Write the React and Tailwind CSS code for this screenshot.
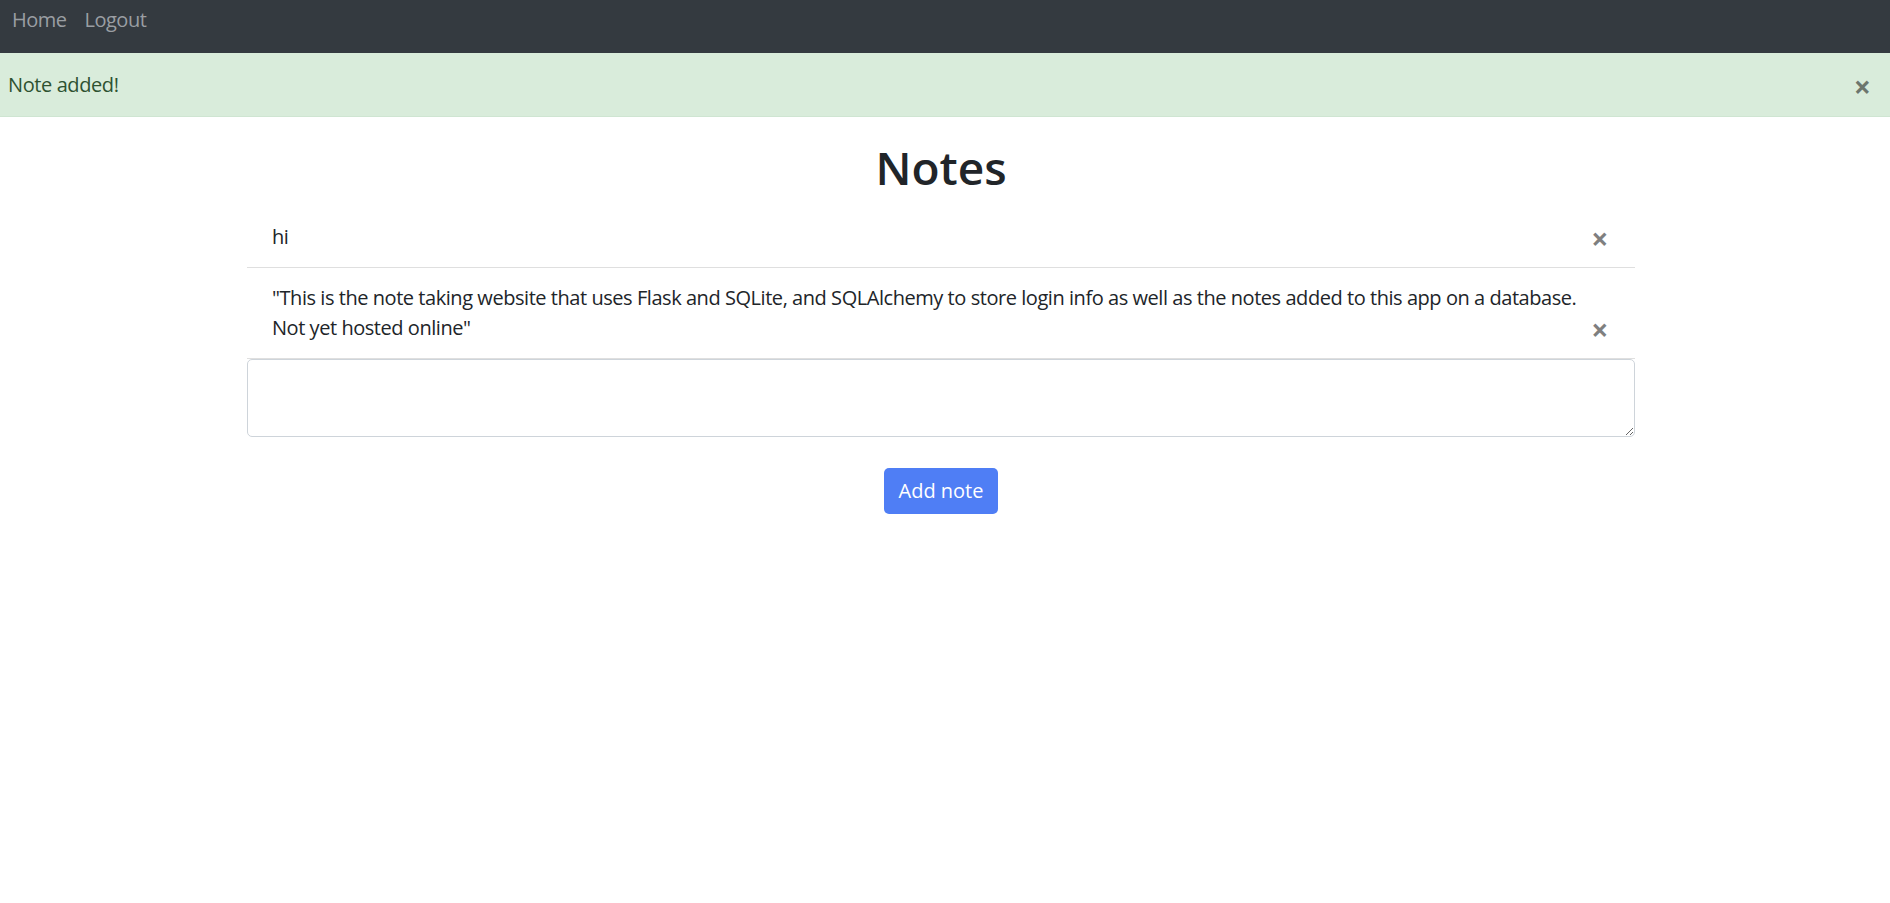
export default function App() {
  const notes = [
    { id: 1, data: "hi" },
    {
      id: 2,
      data: '"This is the note taking website that uses Flask and SQLite, and SQLAlchemy to store login info as well as the notes added to this app on a database. Not yet hosted online"',
    },
  ];

  return (
    <div className="min-h-screen bg-white text-[20px] leading-[30px] text-[#212529] font-['Segoe_UI','Open_Sans',sans-serif]">
      {/* navbar */}
      <nav className="h-[53px] bg-[#343a40] flex items-start pl-3 pt-[5px] tracking-[-0.5px]">
        <a className="text-[#9a9ea3] mr-[18px]">Home</a>
        <a className="text-[#9a9ea3]">Logout</a>
      </nav>

      {/* flash message */}
      <div className="h-[64px] bg-[#d9ecdb] border-b border-[#cfe5d2] flex items-center justify-between pl-2 pr-[19px] text-[#2e5231]">
        <span className="tracking-[-0.4px]">Note added!</span>
        <button className="text-[30px] leading-none font-bold text-black/50 translate-y-[2px]">×</button>
      </div>

      <div className="pr-2">
        <div className="mx-auto w-[1388px]">
          <h1 className="text-center text-[46px] leading-[60px] font-semibold mt-5 mb-[10px]">Notes</h1>

          <ul className="tracking-[-0.45px]">
            {notes.map((note) => (
              <li key={note.id} className="flow-root px-[25px] py-[15px] border-b border-[#dfdfdf]">
                {note.data}
                <button className="float-right text-[30px] leading-[30px] font-bold text-black/50 pr-[2px] translate-y-[2px]">×</button>
              </li>
            ))}
          </ul>

          <textarea className="block w-full h-[78px] border border-[#ced4da] rounded-[5px] px-3 py-2 outline-none" />

          <div className="flex justify-center pt-[31px]">
            <button className="bg-[#4f7ef5] text-white rounded-[5px] px-[15px] py-[8px] leading-[30px]">
              Add note
            </button>
          </div>
        </div>
      </div>
    </div>
  );
}
